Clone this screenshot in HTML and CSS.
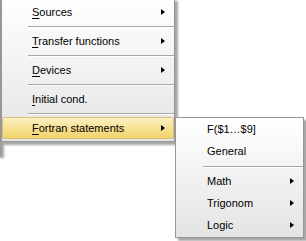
FILE: index.html
```html
<!DOCTYPE html>
<html lang="en">
<head>
    <meta charset="UTF-8">
    <title>Menu</title>
    <link rel="stylesheet" href="styles.css">
</head>
<body>
<div class="desk">
    <div class="menu parent"></div>
    <ul class="menu main">
        <li class="item sub"><u>S</u>ources</li>
        <li class="sep"></li>
        <li class="item sub"><u>T</u>ransfer functions</li>
        <li class="sep"></li>
        <li class="item sub"><u>D</u>evices</li>
        <li class="sep"></li>
        <li class="item"><u>I</u>nitial cond.</li>
        <li class="sep"></li>
        <li class="item sub hot"><u>F</u>ortran statements</li>
    </ul>
    <ul class="menu side">
        <li class="item">F($1…$9]</li>
        <li class="item">General</li>
        <li class="sep"></li>
        <li class="item sub">Math</li>
        <li class="item sub">Trigonom</li>
        <li class="item sub">Logic</li>
    </ul>
</div>
</body>
</html>
```

FILE: styles.css
```css
* {
    margin: 0;
    padding: 0;
    list-style: none;
    box-sizing: border-box;
}

body {
    background: #fff;
    font-family: "Liberation Sans", Arial, sans-serif;
    font-size: 11px;
    color: #000;
}

.desk {
    position: relative;
    width: 306px;
    height: 241px;
    overflow: hidden;
}

.menu {
    position: absolute;
    border: 1px solid #979797;
    background: linear-gradient(#ffffff, #e4e4e4);
    box-shadow: 3px 3px 2px rgba(0, 0, 0, 0.35);
}

/* the menu this one was opened from */
.parent {
    left: -200px;
    top: -5px;
    width: 201px;
    height: 160px;
}

.main {
    left: 1px;
    top: -2px;
    width: 174px;
    padding: 2px 0;
}

.side {
    left: 175px;
    top: 117px;
    width: 129px;
    padding: 0 0 1px;
}

.item {
    position: relative;
    height: 22px;
    line-height: 22px;
    padding-left: 30px;
    white-space: nowrap;
}

.side .item {
    padding-left: 31px;
}

.item u {
    text-decoration-thickness: 1px;
    text-underline-offset: 2px;
}

/* submenu arrow */
.sub::after {
    content: "";
    position: absolute;
    right: 9px;
    top: 8px;
    border-left: 4px solid #000;
    border-top: 3.5px solid transparent;
    border-bottom: 3.5px solid transparent;
}

.hot {
    border: 1px solid #dcc074;
    border-radius: 2px;
    background: linear-gradient(#fcf1c4, #f6df8f 55%, #f2d36c);
    padding-left: 29px;
    line-height: 20px;
}

.hot::after {
    right: 8px;
    top: 7px;
}

.sep {
    height: 7px;
    margin-left: 26px;
    padding-top: 3px;
}

.sep::before {
    content: "";
    display: block;
    height: 1px;
    background: #a6a6a6;
    border-bottom: 1px solid #fff;
    box-sizing: content-box;
}

.side .sep {
    height: 8px;
    margin-left: 27px;
    padding-top: 4px;
}
```
